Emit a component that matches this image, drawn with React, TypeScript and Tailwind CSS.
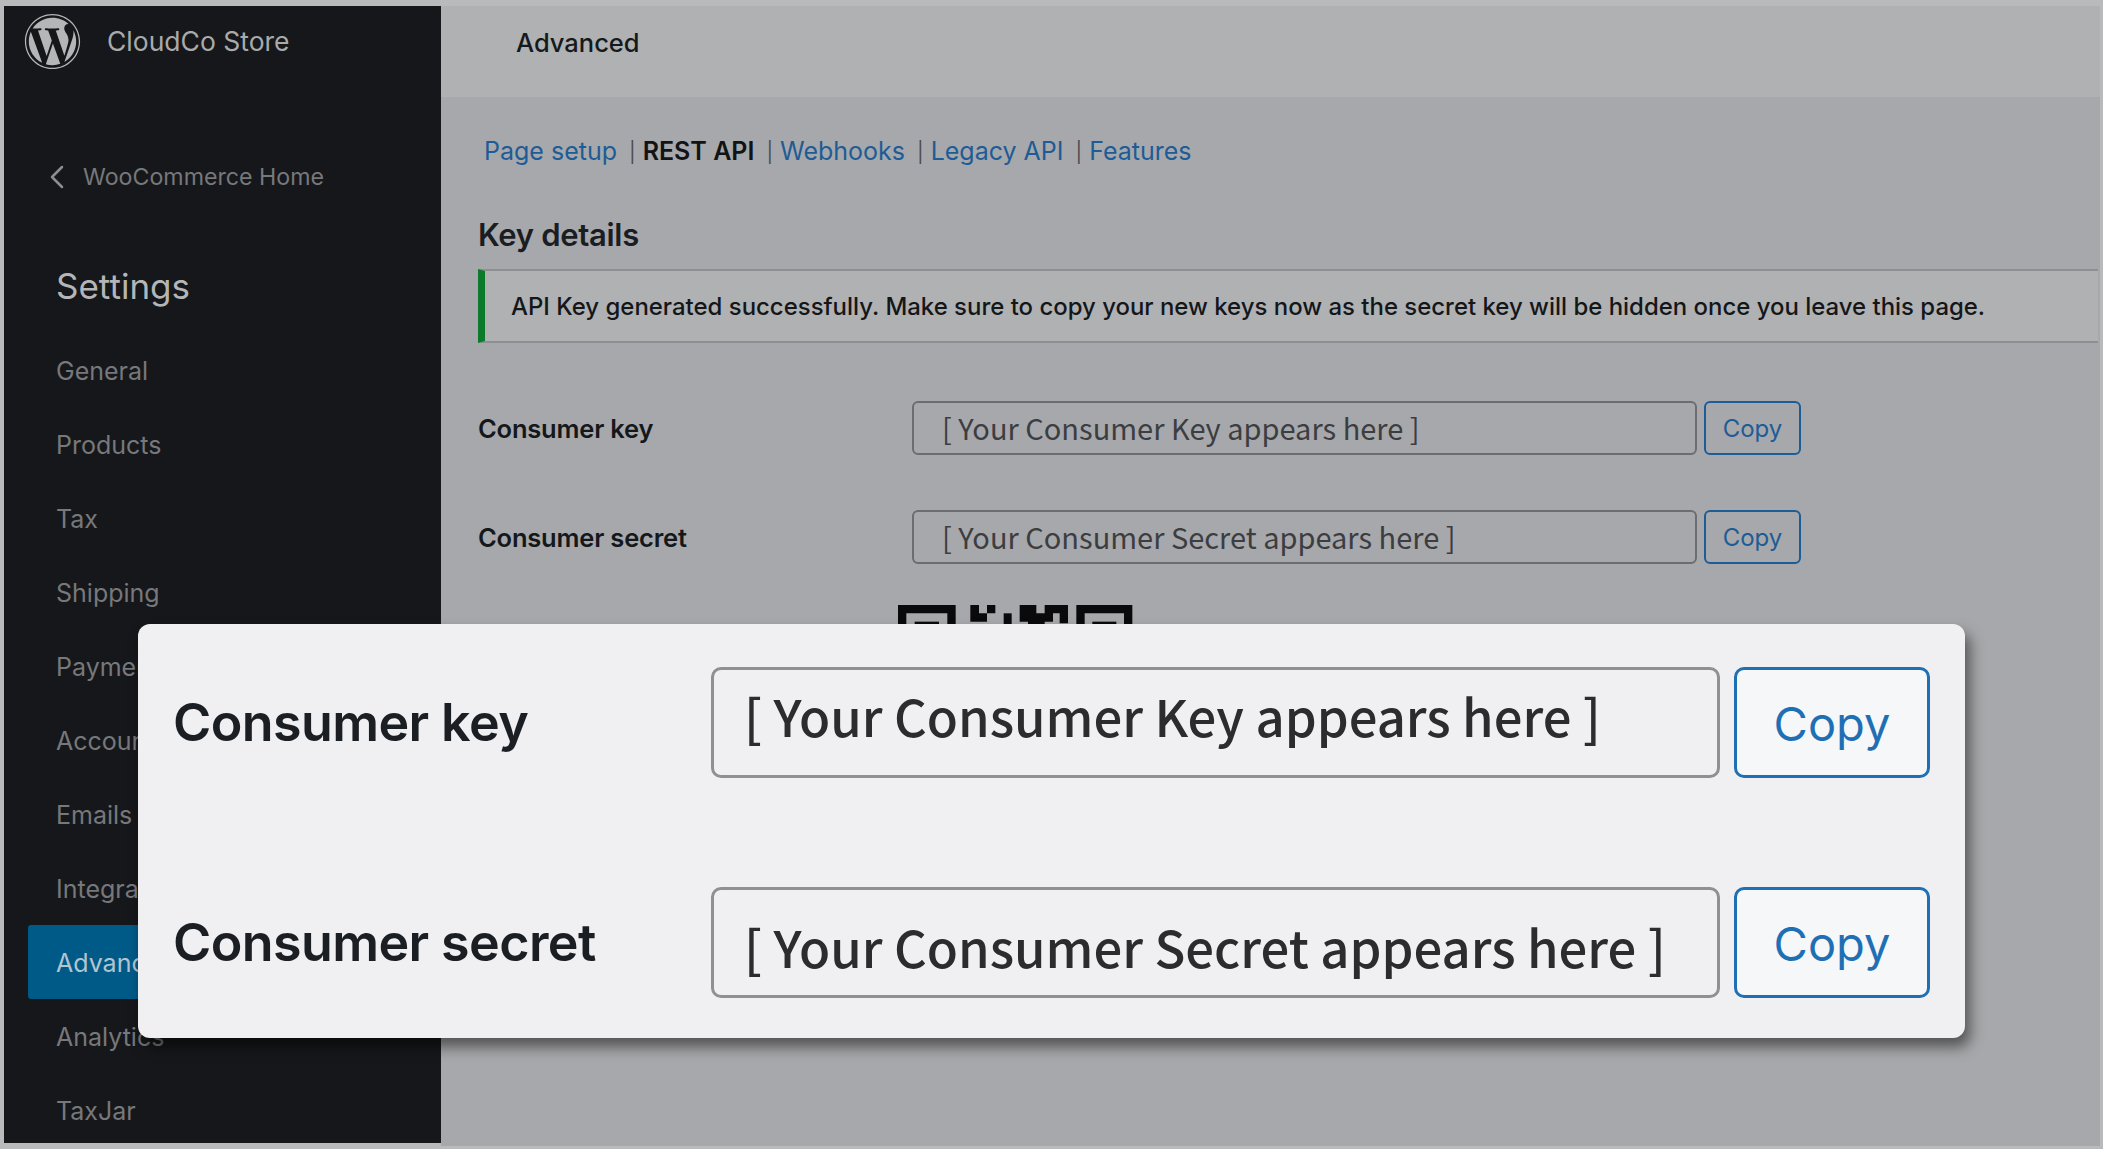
import { FaWordpress } from 'react-icons/fa';
import { ChevronLeft } from 'lucide-react';

const menu = ['General', 'Products', 'Tax', 'Shipping', 'Payments', 'Accounts', 'Emails', 'Integration', 'Advanced', 'Analytics', 'TaxJar'];
const inter = "font-['Inter',sans-serif]";
const source = "font-['Noto_Sans_CJK_SC',sans-serif]";

const KeyRow = ({ label, value }: { label: string; value: string }) => (
  <div className="flex items-center h-[54px]">
    <div className="w-[434px] pt-[2px] text-[25.5px] font-semibold text-[#15181b] tracking-[-0.2px]">{label}</div>
    <div className="w-[785px] h-[54px] border-2 border-[#6c6d70] rounded-[6px] flex items-center pl-[28px]">
      <span className={`${source} pb-[3px] text-[29px] leading-[40px] whitespace-nowrap font-normal text-[#3c3d41]`}>{value}</span>
    </div>
    <button className="ml-[7px] w-[97px] h-[54px] pt-[1px] border-2 border-[#1d5c96] rounded-[6px] text-[24px] text-[#1d5c96]">Copy</button>
  </div>
);

const ZoomRow = ({ label, value, textClass }: { label: string; value: string; textClass: string }) => (
  <div className="flex items-center h-[111px]">
    <div className="w-[538px] text-[52px] font-semibold text-[#1b1f24] tracking-[-0.6px]">{label}</div>
    <div className="w-[1009px] h-[111px] border-[3px] border-[#8f9092] rounded-[10px] flex items-center pl-[30px]">
      <span className={`${source} ${textClass} text-[50.8px] leading-[70px] whitespace-nowrap font-medium text-[#2c2c2e]`}>{value}</span>
    </div>
    <button className="ml-[14px] w-[196px] h-[111px] pt-[4px] bg-[#f6f7f8] border-[3px] border-[#1f6fb5] rounded-[10px] text-[47px] text-[#1f6fb5]">Copy</button>
  </div>
);

const QrTop = () => (
  <svg width="235" height="25" viewBox="55 45 705 75" className="block" fill="#0a0a0c">
    <path fillRule="evenodd" d="M55 45h173v75H55zM80 70v50h123V70z" />
    <rect x="105" y="95" width="73" height="25" />
    <path d="M272 45h26v25h24V45h25v25h-25v25h-50z" />
    <rect x="372" y="70" width="24" height="50" />
    <path d="M420 45h50v25h25V45h70v55h-25V70h-20v25h-25v25h-50V95h-25z" />
    <path fillRule="evenodd" d="M590 45h168v75H590zM615 70v50h118V70z" />
    <rect x="638" y="95" width="72" height="25" />
  </svg>
);

export default function App() {
  return (
    <div className={`${inter} relative w-[2103px] h-[1149px] bg-[#b9babc] overflow-hidden flex pt-[6px] pl-[4px] pr-[3px] pb-[3px]`}>
      <aside className="w-[437px] h-[1137px] shrink-0 bg-[#15171a]">
        <div className="flex items-center h-[57px] mt-[7px] pl-[20px]">
          <FaWordpress className="w-[57px] h-[57px] text-[#b5b6b8]" />
          <span className="ml-[26px] text-[26.5px] text-[#a9aaac]">CloudCo Store</span>
        </div>
        <div className="flex items-center h-[40px] mt-[87px] pl-[33px]">
          <ChevronLeft className="w-[40px] h-[40px] text-[#8d8e91]" strokeWidth={1.5} />
          <span className="ml-[6px] text-[23.2px] text-[#77787b]">WooCommerce Home</span>
        </div>
        <div className="h-[50px] mt-[64px] pl-[52px] flex items-center text-[35px] text-[#b4b5b7]">Settings</div>
        <nav className="mt-[22px] mx-[24px] flex flex-col">
          {menu.map((item) => (
            <div
              key={item}
              className={`h-[74px] pl-[28px] pt-[4px] flex items-center text-[25px] rounded-[3px] ${item === 'Advanced' ? 'bg-[#005a87] text-[#b3c4cf]' : 'text-[#77787b]'}`}
            >
              {item}
            </div>
          ))}
        </nav>
      </aside>

      <main className="flex-1 bg-[#a7a8ab] overflow-hidden">
        <header className="h-[91px] bg-[#b0b1b3] pl-[75px] pb-[16px] flex items-center text-[25.5px] font-medium text-[#16191c]">Advanced</header>
        <div className="pl-[37px]">
          <div className="flex items-center h-[36px] mt-[37px] ml-[6px] text-[25px] text-[#1d5c96]">
            <span>Page setup</span>
            <span className="ml-[12px] text-[20px] text-[#4c4d50]">|</span>
            <span className="ml-[7px] font-semibold text-[#111315]">REST API</span>
            <span className="ml-[12px] text-[20px] text-[#4c4d50]">|</span>
            <span className="ml-[7px]">Webhooks</span>
            <span className="ml-[12px] text-[20px] text-[#4c4d50]">|</span>
            <span className="ml-[7px]">Legacy API</span>
            <span className="ml-[12px] text-[20px] text-[#4c4d50]">|</span>
            <span className="ml-[7px]">Features</span>
          </div>
          <h2 className="h-[40px] mt-[45px] flex items-center text-[31px] font-semibold text-[#1a1d21] tracking-[-0.3px]">Key details</h2>
          <div className="h-[74px] mt-[14px] mr-[2px] bg-[#b0b1b3] border-l-[7px] border-l-[#0b7a2a] border-y-2 border-y-[#8e8f92] pl-[26px] pt-[1px] flex items-center text-[23.95px] font-medium text-[#14171a]">
            API Key generated successfully. Make sure to copy your new keys now as the secret key will be hidden once you leave this page.
          </div>
          <div className="mt-[58px]">
            <KeyRow label="Consumer key" value="[ Your Consumer Key appears here ]" />
          </div>
          <div className="mt-[55px]">
            <KeyRow label="Consumer secret" value="[ Your Consumer Secret appears here ]" />
          </div>
          <div className="mt-[41px] ml-[420px]">
            <QrTop />
          </div>
        </div>
      </main>

      {/* enlarged callout sitting over the page */}
      <section className="absolute left-[138px] top-[624px] w-[1827px] h-[414px] bg-[#f0f0f2] rounded-[12px] shadow-[5px_9px_14px_rgba(0,0,0,0.5)] pl-[35px] pt-[43px] flex flex-col gap-[109px]">
        <ZoomRow label="Consumer key" value="[ Your Consumer Key appears here ]" textClass="pb-[16px]" />
        <ZoomRow label="Consumer secret" value="[ Your Consumer Secret appears here ]" textClass="pt-[6px]" />
      </section>
    </div>
  );
}
